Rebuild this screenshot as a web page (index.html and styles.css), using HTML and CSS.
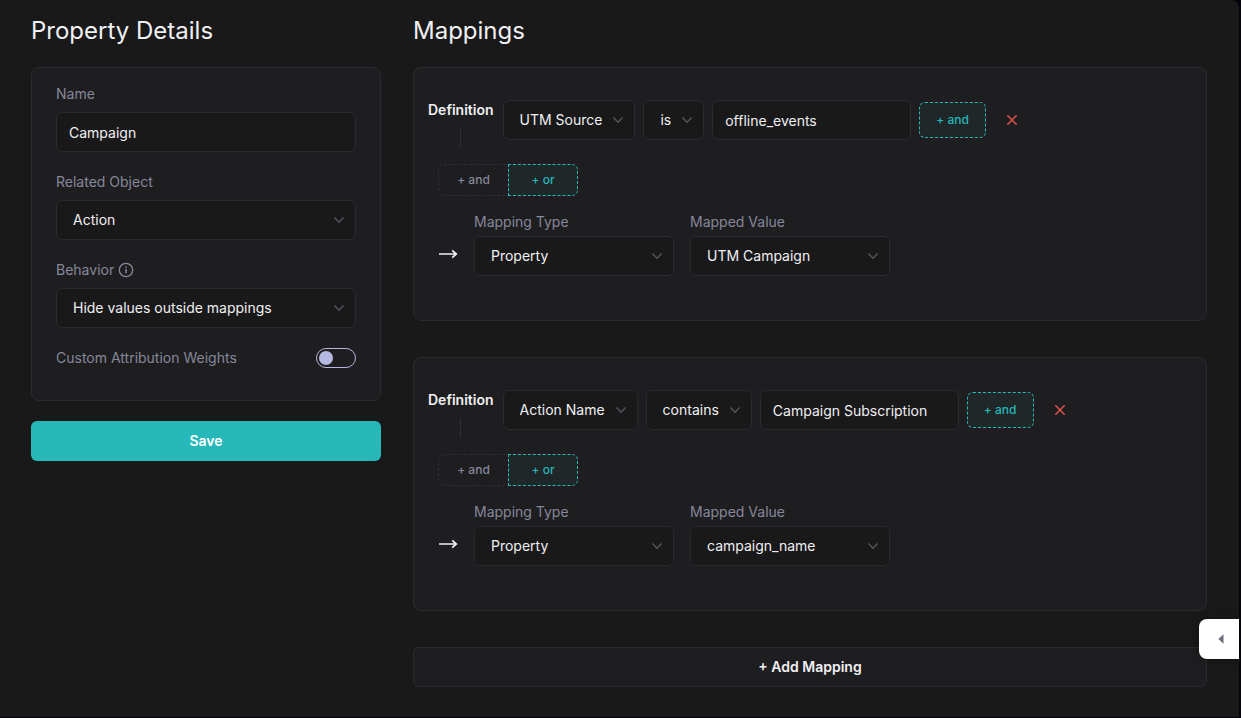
FILE: index.html
```html
<!DOCTYPE html>
<html lang="en">
<head>
<meta charset="utf-8">
<meta name="viewport" content="width=device-width, initial-scale=1">
<title>Property Details</title>
<link rel="stylesheet" href="styles.css">
</head>
<body>
<svg class="sprite" aria-hidden="true">
  <symbol id="chevron" viewBox="0 0 12 12"><path d="M1.500 3.500 6 8.300l4.500-4.800" fill="none" stroke="currentColor" stroke-width="1.400"/></symbol>
  <symbol id="cross" viewBox="0 0 12 12"><path d="m1.300 1.300 9.400 9.400M10.700 1.300l-9.400 9.400" fill="none" stroke="currentColor" stroke-width="1.400"/></symbol>
  <symbol id="arrow" viewBox="0 0 20 12"><path d="M1 6h17.200M14.200 2.300 18.300 6l-4.100 3.700" fill="none" stroke="currentColor" stroke-width="1.700"/></symbol>
</svg>
<div class="app">
  <main class="layout">
    <section class="column">
      <h1 class="heading">Property Details</h1>
      <form class="details" id="details">
        <div class="panel details-panel">
          <div class="field">
            <label class="label" for="name">Name</label>
            <input class="input" id="name" type="text" value="Campaign">
          </div>
          <div class="field">
            <label class="label" for="object">Related Object</label>
            <span class="select-box"><select class="select" id="object"><option>Action</option></select><svg class="chevron"><use href="#chevron"/></svg></span>
          </div>
          <div class="field">
            <label class="label" for="behavior">Behavior
              <svg class="info" viewBox="0 0 16 16" aria-hidden="true"><circle cx="8" cy="8" r="6.700" fill="none" stroke="currentColor" stroke-width="1.300"/><path d="M8 7v4.200M8 4.600v1.300" stroke="currentColor" stroke-width="1.500"/></svg>
            </label>
            <span class="select-box"><select class="select" id="behavior"><option>Hide values outside mappings</option></select><svg class="chevron"><use href="#chevron"/></svg></span>
          </div>
          <div class="toggle-row">
            <label class="label" for="weights">Custom Attribution Weights</label>
            <input class="toggle" id="weights" type="checkbox" role="switch">
          </div>
        </div>
        <button class="save" type="submit">Save</button>
      </form>
    </section>

    <section class="column">
      <h2 class="heading">Mappings</h2>
      <div class="mappings">
        <article class="panel mapping">
          <div class="definition">
            <div class="definition-name">Definition</div>
            <div class="rule">
              <span class="select-box"><select class="select" aria-label="Attribute"><option>UTM Source</option></select><svg class="chevron"><use href="#chevron"/></svg></span>
              <span class="select-box"><select class="select" aria-label="Operator"><option>is</option></select><svg class="chevron"><use href="#chevron"/></svg></span>
              <input class="input rule-value" type="text" aria-label="Value" value="offline_events">
              <button class="chip chip-accent" type="button">+ and</button>
              <button class="remove" type="button" aria-label="Remove rule"><svg><use href="#cross"/></svg></button>
            </div>
          </div>
          <div class="joiner">
            <button class="chip chip-left" type="button">+ and</button>
            <button class="chip chip-accent chip-right" type="button">+ or</button>
          </div>
          <div class="result">
            <svg class="arrow" aria-hidden="true"><use href="#arrow"/></svg>
            <div class="result-field">
              <label class="label" for="type-1">Mapping Type</label>
              <span class="select-box"><select class="select" id="type-1"><option>Property</option></select><svg class="chevron"><use href="#chevron"/></svg></span>
            </div>
            <div class="result-field">
              <label class="label" for="value-1">Mapped Value</label>
              <span class="select-box"><select class="select" id="value-1"><option>UTM Campaign</option></select><svg class="chevron"><use href="#chevron"/></svg></span>
            </div>
          </div>
        </article>

        <article class="panel mapping">
          <div class="definition">
            <div class="definition-name">Definition</div>
            <div class="rule">
              <span class="select-box"><select class="select" aria-label="Attribute"><option>Action Name</option></select><svg class="chevron"><use href="#chevron"/></svg></span>
              <span class="select-box"><select class="select" aria-label="Operator"><option>contains</option></select><svg class="chevron"><use href="#chevron"/></svg></span>
              <input class="input rule-value" type="text" aria-label="Value" value="Campaign Subscription">
              <button class="chip chip-accent" type="button">+ and</button>
              <button class="remove" type="button" aria-label="Remove rule"><svg><use href="#cross"/></svg></button>
            </div>
          </div>
          <div class="joiner">
            <button class="chip chip-left" type="button">+ and</button>
            <button class="chip chip-accent chip-right" type="button">+ or</button>
          </div>
          <div class="result">
            <svg class="arrow" aria-hidden="true"><use href="#arrow"/></svg>
            <div class="result-field">
              <label class="label" for="type-2">Mapping Type</label>
              <span class="select-box"><select class="select" id="type-2"><option>Property</option></select><svg class="chevron"><use href="#chevron"/></svg></span>
            </div>
            <div class="result-field">
              <label class="label" for="value-2">Mapped Value</label>
              <span class="select-box"><select class="select" id="value-2"><option>campaign_name</option></select><svg class="chevron"><use href="#chevron"/></svg></span>
            </div>
          </div>
        </article>

        <button class="panel add" type="button">+ Add Mapping</button>
      </div>
    </section>
  </main>
  <button class="drawer" type="button" aria-label="Open side panel"><svg viewBox="0 0 6 10"><path d="M5.500 0.300v9.400L0.300 5z" fill="currentColor"/></svg></button>
</div>
</body>
</html>
```

FILE: styles.css
```css
* {
  box-sizing: border-box;
}

body {
  margin: 0;
  min-height: 100vh;
  background: #05050f;
  color: #f0f0f3;
  font: 14px/20px Inter, "Liberation Sans", sans-serif;
}

button,
input,
select {
  margin: 0;
  color: inherit;
  font: inherit;
}

button {
  cursor: pointer;
}

.sprite {
  display: none;
}

.app {
  min-height: calc(100vh - 1px);
  margin-right: 2px;
  border-top-right-radius: 8px;
  background: #191919;
}

.layout {
  display: grid;
  grid-template-columns: 350px minmax(0, 1fr);
  gap: 32px;
  padding: 13px 32px 30px 31px;
}

.heading {
  margin: 0 0 18px;
  font-size: 24px;
  font-weight: 400;
  line-height: 36px;
}

.panel {
  border: 1px solid #2a2a32;
  border-radius: 8px;
  background: #1e1e20;
}

.details,
.details-panel {
  display: flex;
  flex-direction: column;
  gap: 20px;
}

.details-panel {
  padding: 16px 24px 32px;
}

.field {
  display: grid;
  gap: 8px;
}

.label {
  display: flex;
  align-items: center;
  gap: 4px;
  color: #85879a;
}

.info {
  width: 16px;
  height: 16px;
}

.input,
.select {
  width: 100%;
  height: 40px;
  border: 1px solid #2a2a32;
  border-radius: 6px;
  outline: 0;
  background: #191919;
}

.input {
  padding: 0 12px;
}

.select-box {
  display: grid;
  align-items: center;
}

.select {
  grid-area: 1 / 1;
  padding: 0 32px 0 16px;
  appearance: none;
}

.chevron {
  grid-area: 1 / 1;
  justify-self: end;
  width: 12px;
  height: 12px;
  margin-right: 11px;
  color: #55565f;
  pointer-events: none;
}

.toggle-row {
  display: flex;
  align-items: center;
  justify-content: space-between;
}

.toggle {
  display: flex;
  align-items: center;
  width: 40px;
  height: 20px;
  padding: 0 2px;
  border: 1px solid #b5b8e0;
  border-radius: 10px;
  appearance: none;
}

.toggle::before {
  width: 14px;
  height: 14px;
  border-radius: 50%;
  background: #b5b8e0;
  content: "";
}

.toggle:checked {
  justify-content: flex-end;
}

.save {
  height: 40px;
  border: 0;
  border-radius: 6px;
  background: #27b8b9;
  color: #fff;
  font-weight: 600;
}

.mappings {
  display: flex;
  flex-direction: column;
  gap: 36px;
}

.mapping {
  padding: 32px 14px 44px;
}

.definition {
  display: flex;
  gap: 9px;
}

.definition-name {
  display: flex;
  flex-direction: column;
  align-items: center;
  gap: 8px;
  font-weight: 600;
}

.definition-name::after {
  width: 1px;
  height: 20px;
  background: #2e2e38;
  content: "";
}

.rule {
  display: flex;
  align-items: center;
  gap: 8px;
  height: 40px;
}

.rule .select {
  width: auto;
  field-sizing: content;
}

.rule-value {
  width: 199px;
}

.chip {
  height: 36px;
  padding: 0 16px;
  border: 1px dashed #2e2e33;
  border-radius: 6px;
  background: transparent;
  color: #85879a;
  font-size: 12px;
  font-weight: 500;
}

.chip-accent {
  border-color: #27b8b9;
  background: #1f2728;
  color: #27b8b9;
}

.remove {
  display: grid;
  place-items: center;
  width: 36px;
  height: 36px;
  padding: 0;
  border: 0;
  background: transparent;
  color: #e5534b;
}

.remove svg {
  width: 12px;
  height: 12px;
}

.joiner {
  display: flex;
  margin: 16px 0 16px 10px;
}

.joiner .chip {
  width: 70px;
  height: 32px;
}

.joiner .chip-left {
  border-right: 0;
  border-radius: 6px 0 0 6px;
}

.joiner .chip-right {
  border-radius: 0 6px 6px 0;
}

.result {
  display: flex;
  align-items: flex-end;
  gap: 16px;
  padding-left: 10px;
}

.arrow {
  width: 20px;
  height: 12px;
  margin-bottom: 16px;
}

.result-field {
  display: grid;
  gap: 4px;
  width: 200px;
}

.add {
  height: 40px;
  border-radius: 6px;
  font-weight: 600;
}

.drawer {
  position: fixed;
  right: 2px;
  bottom: 59px;
  display: grid;
  place-items: center;
  width: 40px;
  height: 40px;
  padding: 0 0 0 4px;
  border: 0;
  border-radius: 8px 0 0 8px;
  background: #fff;
  box-shadow: 0 0 8px rgba(0, 0, 0, 0.3);
  color: #6d6e7a;
}

.drawer svg {
  width: 6px;
  height: 10px;
}
```
